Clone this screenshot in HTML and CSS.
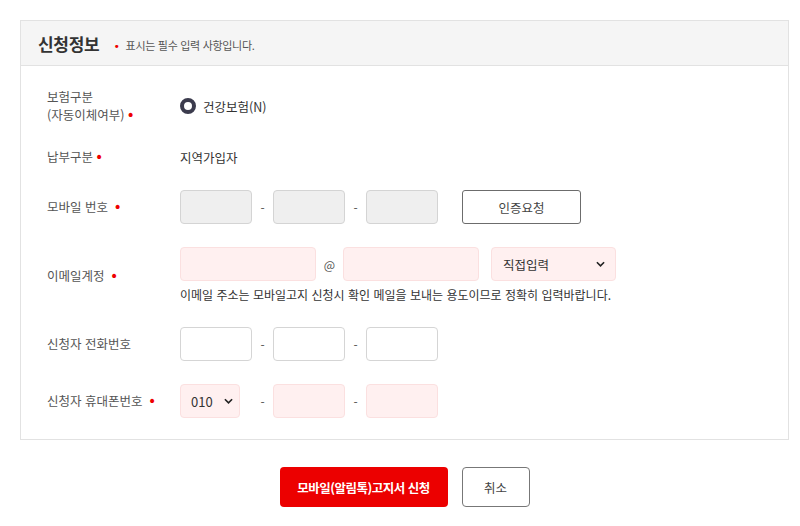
FILE: index.html
```html
<!DOCTYPE html>
<html lang="ko">
<head>
<meta charset="utf-8">
<title>신청정보</title>
<link rel="stylesheet" href="styles.css">
</head>
<body>
<div class="page">
  <section class="box">
    <header class="box-head">
      <h2 class="box-title">신청정보</h2>
      <p class="box-note"><span class="req req--note">•</span>표시는 필수 입력 사항입니다.</p>
    </header>
    <div class="box-body">
      <div class="row row--info row--first">
        <div class="label">보험구분<br>(자동이체여부)<span class="req">•</span></div>
        <div class="field">
          <span class="radio"></span><span class="value">건강보험(N)</span>
        </div>
      </div>
      <div class="row row--info">
        <div class="label">납부구분<span class="req">•</span></div>
        <div class="field"><span class="value">지역가입자</span></div>
      </div>
      <div class="row">
        <div class="label">모바일 번호 <span class="req">•</span></div>
        <div class="field">
          <span class="input input--gray"></span><span class="dash">-</span>
          <span class="input input--gray"></span><span class="dash">-</span>
          <span class="input input--gray"></span>
          <button class="btn-outline btn-auth" type="button">인증요청</button>
        </div>
      </div>
      <div class="row">
        <div class="label">이메일계정 <span class="req">•</span></div>
        <div class="field field--stack">
          <div class="field-line">
            <span class="input input--pink input--wide"></span><span class="at">@</span>
            <span class="input input--pink input--wide"></span>
            <span class="select select--wide">직접입력<svg class="chev" viewBox="0 0 10 6"><path d="M1 1l4 4 4-4" fill="none" stroke="#222" stroke-width="1.8"/></svg></span>
          </div>
          <p class="help">이메일 주소는 모바일고지 신청시 확인 메일을 보내는 용도이므로 정확히 입력바랍니다.</p>
        </div>
      </div>
      <div class="row">
        <div class="label">신청자 전화번호</div>
        <div class="field">
          <span class="input"></span><span class="dash">-</span>
          <span class="input"></span><span class="dash">-</span>
          <span class="input"></span>
        </div>
      </div>
      <div class="row row--last">
        <div class="label">신청자 휴대폰번호 <span class="req">•</span></div>
        <div class="field">
          <span class="select select--short">010<svg class="chev" viewBox="0 0 10 6"><path d="M1 1l4 4 4-4" fill="none" stroke="#222" stroke-width="1.8"/></svg></span><span class="dash dash--after-select">-</span>
          <span class="input input--pink"></span><span class="dash">-</span>
          <span class="input input--pink"></span>
        </div>
      </div>
    </div>
  </section>
  <div class="actions">
    <button class="btn-primary" type="button">모바일(알림톡)고지서 신청</button>
    <button class="btn-outline btn-cancel" type="button">취소</button>
  </div>
</div>
</body>
</html>
```

FILE: styles.css
```css
* { box-sizing: border-box; }
body {
  margin: 0;
  background: #fff;
  font-family: "Noto Sans CJK KR", "Noto Sans", sans-serif;
  color: #333;
  font-size: 13px;
}
.page { padding: 20px 11px 0 20px; }
.box { border: 1px solid #e2e2e2; }
.box-head {
  height: 45px;
  background: #f5f5f5;
  border-bottom: 1px solid #e2e2e2;
  display: flex;
  align-items: center;
  padding-left: 17px;
}
.box-title {
  margin: 0;
  font-size: 17px;
  font-weight: 700;
  color: #333;
  letter-spacing: -0.3px;
}
.box-note {
  margin: 0 0 0 14px;
  font-size: 11px;
  color: #555;
  letter-spacing: -0.3px;
  padding-top: 3px;
}
.req { color: #e00; font-family: "DejaVu Sans", sans-serif; font-size: 14px; line-height: 1; }
.req--note { margin-right: 6px; font-size: 11px; }
.box-body { padding: 22px 0 21px 26px; }
.row {
  display: flex;
  align-items: center;
  min-height: 34px;
  margin-bottom: 23px;
}
.row--info { margin-bottom: 16px; }
.row--last { margin-bottom: 0; }
.label {
  width: 133px;
  flex: none;
  color: #555;
  font-size: 12.5px;
  line-height: 18px;
  letter-spacing: 0;
}
.label .req { margin-left: 2px; }
.field { display: flex; align-items: center; }
.field--stack { flex-direction: column; align-items: flex-start; }
.field-line { display: flex; align-items: center; }
.value { font-size: 12.5px; color: #333; letter-spacing: 0; }
.radio {
  width: 16px;
  height: 16px;
  border-radius: 50%;
  border: 4.5px solid #3b3b4d;
  background: #fff;
  margin-right: 7px;
}
.input {
  width: 72px;
  height: 34px;
  border: 1px solid #d5d5d5;
  border-radius: 4px;
  background: #fff;
}
.input--gray { background: #efefef; border-color: #d4d4d4; }
.input--pink { background: #fff0f0; border-color: #fbe0e0; }
.input--wide { width: 136px; }
.dash {
  width: 21px;
  text-align: center;
  color: #555;
  font-size: 12px;
}
.dash--after-select { width: 21px; margin-left: 12px; }
.at {
  width: 27px;
  text-align: center;
  color: #555;
  font-size: 12px;
}
.select {
  height: 34px;
  border: 1px solid #fbe0e0;
  background: #fff0f0;
  border-radius: 4px;
  display: flex;
  align-items: center;
  justify-content: space-between;
  padding: 0 10px 0 11px;
  font-size: 12.5px;
  color: #333;
}
.select--wide { width: 125px; margin-left: 12px; }
.select--short { width: 60px; padding: 0 6px 0 10px; font-size: 13px; }
.chev { width: 9px; height: 6px; }
.help {
  margin: 5px 0 0;
  font-size: 12px;
  line-height: 18px;
  color: #333;
  letter-spacing: 0;
}
.btn-outline {
  height: 34px;
  border: 1px solid #6c6c6c;
  border-radius: 3px;
  background: #fff;
  color: #444;
  font-family: inherit;
  font-size: 12.5px;
  cursor: pointer;
}
.btn-auth { width: 119px; margin-left: 24px; }
.actions {
  display: flex;
  justify-content: center;
  gap: 14px;
  margin-top: 27px;
}
.btn-primary {
  width: 168px;
  height: 40px;
  border: 0;
  border-radius: 4px;
  background: #ec0000;
  color: #fff;
  font-family: inherit;
  font-weight: 700;
  font-size: 12.5px;
  letter-spacing: -0.5px;
}
.btn-cancel { width: 68px; height: 40px; border-color: #777; border-radius: 4px; }
```
